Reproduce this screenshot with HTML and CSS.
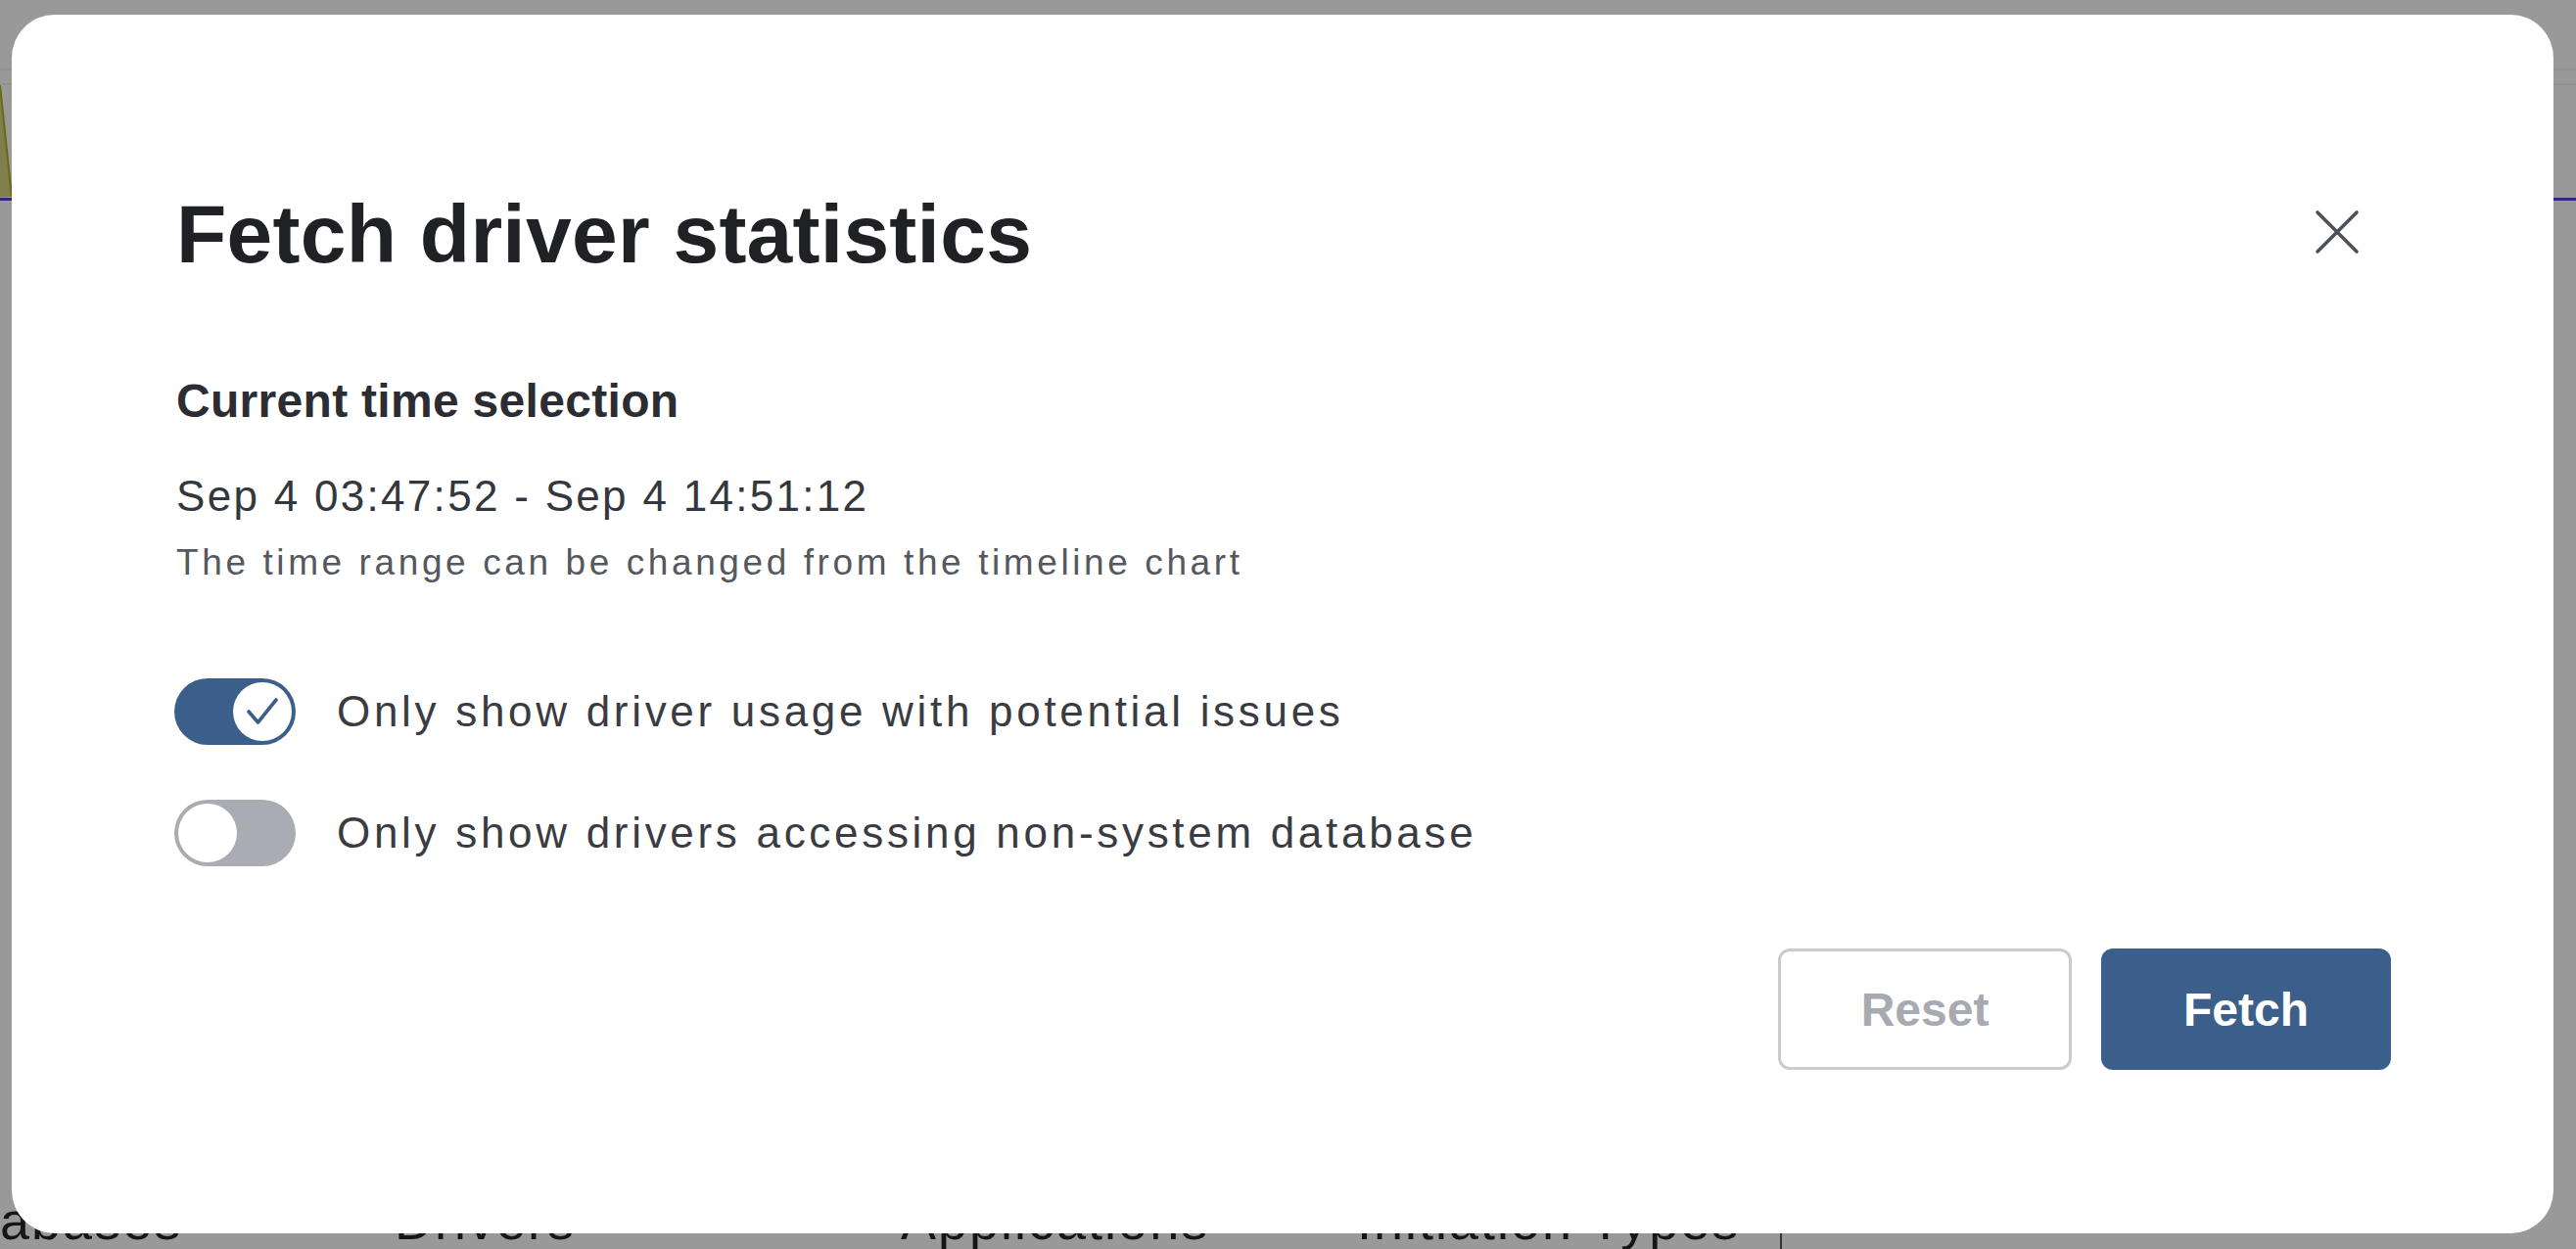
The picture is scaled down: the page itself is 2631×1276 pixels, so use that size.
FILE: index.html
```html
<!DOCTYPE html>
<html lang="en">
<head>
<meta charset="utf-8">
<title>Fetch driver statistics</title>
<link rel="stylesheet" href="styles.css">
</head>
<body>
<div class="page">
  <header class="page-header"></header>
  <div class="page-subheader"></div>
  <div class="page-chart">
    <svg class="chart-svg" width="2631" height="118">
      <polygon points="0,0 12,114 0,114" fill="#d6d27e"/>
      <line x1="0" y1="0" x2="12" y2="114" stroke="#b3ad1c" stroke-width="2"/>
      <rect x="0" y="115" width="2631" height="3" fill="#5b40d2"/>
    </svg>
  </div>
  <div class="page-body"></div>
  <nav class="page-tabs">
    <span class="tab">Databases</span>
    <span class="tab">Drivers</span>
    <span class="tab">Applications</span>
    <span class="tab">Initiation Types</span>
    <span class="tab-sep"></span>
  </nav>
</div>
<div class="backdrop"></div>
<div class="modal" role="dialog" aria-labelledby="modal-title">
  <div class="modal-header">
    <h1 class="modal-title" id="modal-title">Fetch driver statistics</h1>
    <button class="close-btn" aria-label="Close">
      <svg width="46" height="46" viewBox="0 0 46 46">
        <path d="M3 3 L43 43 M43 3 L3 43" stroke="#4d5058" stroke-width="3.6" stroke-linecap="round" fill="none"/>
      </svg>
    </button>
  </div>
  <section class="time-section">
    <h2 class="section-label">Current time selection</h2>
    <p class="time-range">Sep 4 03:47:52 - Sep 4 14:51:12</p>
    <p class="hint">The time range can be changed from the timeline chart</p>
  </section>
  <div class="toggles">
    <label class="toggle-row">
      <span class="switch switch-on">
        <span class="knob">
          <svg width="60" height="60" viewBox="0 0 60 60">
            <path d="M16 30 L25.5 41 L44 18" stroke="#3b5f8a" stroke-width="3.6" stroke-linecap="round" stroke-linejoin="round" fill="none"/>
          </svg>
        </span>
      </span>
      <span class="toggle-label">Only show driver usage with potential issues</span>
    </label>
    <label class="toggle-row">
      <span class="switch switch-off">
        <span class="knob"></span>
      </span>
      <span class="toggle-label">Only show drivers accessing non-system database</span>
    </label>
  </div>
  <div class="actions">
    <button class="btn btn-secondary">Reset</button>
    <button class="btn btn-primary">Fetch</button>
  </div>
</div>
</body>
</html>
```
FILE: styles.css
```css
html, body {
  margin: 0;
  padding: 0;
  height: 100%;
  overflow: hidden;
}

body {
  font-family: "Liberation Sans", Arial, sans-serif;
  background: #ffffff;
}

/* underlying page (dimmed by the backdrop) */
.page {
  height: 1279px;
  display: grid;
  grid-template-rows: 72px 15px 118px 1fr 64px;
}

.page-header {
  border-bottom: 2px solid #f2f2f2;
}

.page-subheader {
  border-bottom: 2px solid #f2f2f2;
}

.page-chart {
  overflow: hidden;
}

.chart-svg {
  display: block;
}

.page-tabs {
  display: grid;
  grid-template-columns: 493px 517px 466px 432px 2px;
  margin-left: -90px;
  font-size: 54px;
  line-height: 64px;
  letter-spacing: 2px;
  color: #262626;
  align-items: stretch;
}

.tab {
  white-space: nowrap;
}

.tab-sep {
  background: #5a5a5a;
}

.backdrop {
  position: fixed;
  inset: 0;
  background: rgba(0, 0, 0, 0.4);
}

/* modal */
.modal {
  position: absolute;
  left: 12px;
  top: 15px;
  width: 2596px;
  height: 1245px;
  box-sizing: border-box;
  padding: 174px 166px 0 168px;
  background: #ffffff;
  border-radius: 44px;
  display: flex;
  flex-direction: column;
}

.modal-header {
  display: flex;
  align-items: center;
  justify-content: space-between;
  height: 100px;
}

.modal-title {
  margin: 0;
  font-size: 84px;
  line-height: 100px;
  font-weight: 700;
  letter-spacing: 0.25px;
  color: #202125;
}

.close-btn {
  width: 46px;
  height: 46px;
  margin: 0 32px 5px 0;
  padding: 0;
  border: none;
  background: none;
  display: flex;
}

.time-section {
  margin-top: 91px;
}

.section-label {
  margin: 0;
  font-size: 48px;
  line-height: 60px;
  font-weight: 700;
  letter-spacing: 0.3px;
  color: #2b2d32;
}

.time-range {
  margin: 39px 0 0;
  font-size: 44px;
  line-height: 56px;
  letter-spacing: 2.3px;
  color: #34373c;
}

.hint {
  margin: 17px 0 0;
  font-size: 37px;
  line-height: 46px;
  letter-spacing: 3.6px;
  color: #55585e;
}

.toggles {
  margin-top: 95px;
  display: flex;
  flex-direction: column;
  gap: 56px;
}

.toggle-row {
  display: flex;
  align-items: center;
  gap: 42px;
  height: 68px;
}

.switch {
  width: 124px;
  height: 68px;
  margin-left: -2px;
  box-sizing: border-box;
  padding: 0 4px;
  border-radius: 34px;
  display: flex;
  align-items: center;
}

.switch-on {
  background: #3b5f8a;
  justify-content: flex-end;
}

.switch-off {
  background: #a9acb3;
  justify-content: flex-start;
}

.knob {
  width: 60px;
  height: 60px;
  border-radius: 50%;
  background: #ffffff;
  display: flex;
}

.toggle-label {
  font-size: 44px;
  line-height: 56px;
  letter-spacing: 3.7px;
  color: #3a3c42;
}

.actions {
  margin-top: 84px;
  display: flex;
  justify-content: flex-end;
  gap: 30px;
}

.btn {
  height: 124px;
  box-sizing: border-box;
  border-radius: 12px;
  font-family: "Liberation Sans", Arial, sans-serif;
  font-size: 48px;
  font-weight: 700;
  padding: 0;
}

.btn-secondary {
  width: 300px;
  background: #ffffff;
  border: 3px solid #c9cbd0;
  color: #a7aab0;
}

.btn-primary {
  width: 296px;
  background: #3b5f8a;
  border: none;
  color: #ffffff;
}
```
